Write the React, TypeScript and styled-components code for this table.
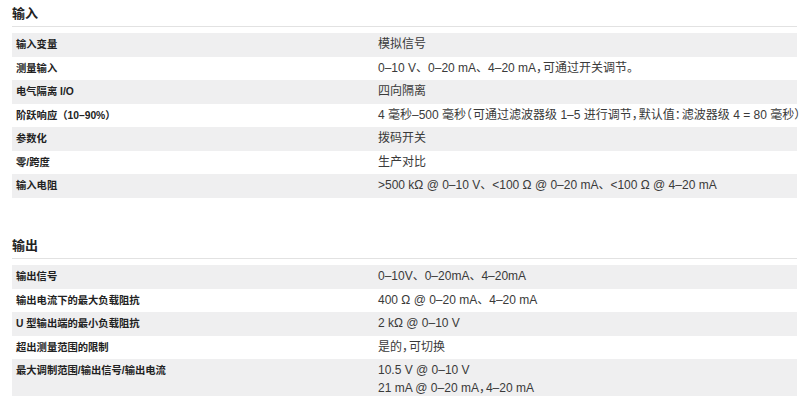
import * as React from 'react';
import styled, { createGlobalStyle } from 'styled-components';

type Spec = { label: string; value: string[] };

const inputs: Spec[] = [
  { label: '输入变量', value: ['模拟信号'] },
  { label: '测量输入', value: ['0–10 V、0–20 mA、4–20 mA，可通过开关调节。'] },
  { label: '电气隔离 I/O', value: ['四向隔离'] },
  {
    label: '阶跃响应（10–90%）',
    value: ['4 毫秒–500 毫秒（可通过滤波器级 1–5 进行调节，默认值：滤波器级 4 = 80 毫秒）'],
  },
  { label: '参数化', value: ['拨码开关'] },
  { label: '零/跨度', value: ['生产对比'] },
  { label: '输入电阻', value: ['>500 kΩ @ 0–10 V、<100 Ω @ 0–20 mA、<100 Ω @ 4–20 mA'] },
];

const outputs: Spec[] = [
  { label: '输出信号', value: ['0–10V、0–20mA、4–20mA'] },
  { label: '输出电流下的最大负载阻抗', value: ['400 Ω @ 0–20 mA、4–20 mA'] },
  { label: 'U 型输出端的最小负载阻抗', value: ['2 kΩ @ 0–10 V'] },
  { label: '超出测量范围的限制', value: ['是的，可切换'] },
  { label: '最大调制范围/输出信号/输出电流', value: ['10.5 V @ 0–10 V', '21 mA @ 0–20 mA，4–20 mA'] },
];

// full-width comma, colon and brackets are set narrower in the values, as on the page
const HALF = /([，：（）])/;

function Text({ children }: { children: string }) {
  return (
    <>
      {children.split(HALF).map((part, i) =>
        HALF.test(part) ? <Punct key={i}>{part}</Punct> : part,
      )}
    </>
  );
}

function SpecSection({ title, rows, first }: { title: string; rows: Spec[]; first?: boolean }) {
  return (
    <Section $first={first}>
      <Heading>{title}</Heading>
      <Table>
        {rows.map((r, i) => (
          <Row key={r.label} $shade={i % 2 === 0}>
            <Label>{r.label}</Label>
            <Value>
              {r.value.map((v) => (
                <div key={v}>
                  <Text>{v}</Text>
                </div>
              ))}
            </Value>
          </Row>
        ))}
      </Table>
    </Section>
  );
}

export default function App() {
  return (
    <>
      <GlobalStyle />
      <Page>
        <SpecSection title="输入" rows={inputs} first />
        <SpecSection title="输出" rows={outputs} />
      </Page>
    </>
  );
}

const GlobalStyle = createGlobalStyle`
  body {
    margin: 0;
    background: #ffffff;
    font-family: 'Liberation Sans', Arial, 'Noto Sans CJK SC', sans-serif;
  }
`;

const Page = styled.div`
  display: flex;
  flex-direction: column;
  padding: 0 3px 0 12px;
  width: 800px;
  height: 396px;
  box-sizing: border-box;
  overflow: hidden;
`;

const Section = styled.section<{ $first?: boolean }>`
  display: flex;
  flex-direction: column;
  margin-top: ${(p) => (p.$first ? '0' : '34px')};
`;

const Heading = styled.h2`
  margin: 0;
  padding: 4px 0 2px;
  font-size: 13px;
  line-height: 20px;
  font-weight: bold;
  color: #222222;
  border-bottom: 1px solid #e2e2e2;
`;

const Table = styled.div`
  display: flex;
  flex-direction: column;
  margin-top: 6px;
`;

const Row = styled.div<{ $shade: boolean }>`
  display: grid;
  grid-template-columns: 362px 1fr;
  background: ${(p) => (p.$shade ? '#efeff0' : '#ffffff')};
`;

const Label = styled.div`
  padding: 3px 4px;
  font-size: 10.3px;
  line-height: 17.57px;
  font-weight: bold;
  color: #222222;
  white-space: nowrap;
`;

const Value = styled.div`
  padding: 3px 4px;
  font-size: 12px;
  line-height: 17.57px;
  color: #3a3a3a;
  white-space: nowrap;
`;

const Punct = styled.span`
  font-family: 'Noto Sans CJK SC', sans-serif;
  font-feature-settings: 'halt' 1;
  line-height: 1;
  margin-right: 1px;
`;
